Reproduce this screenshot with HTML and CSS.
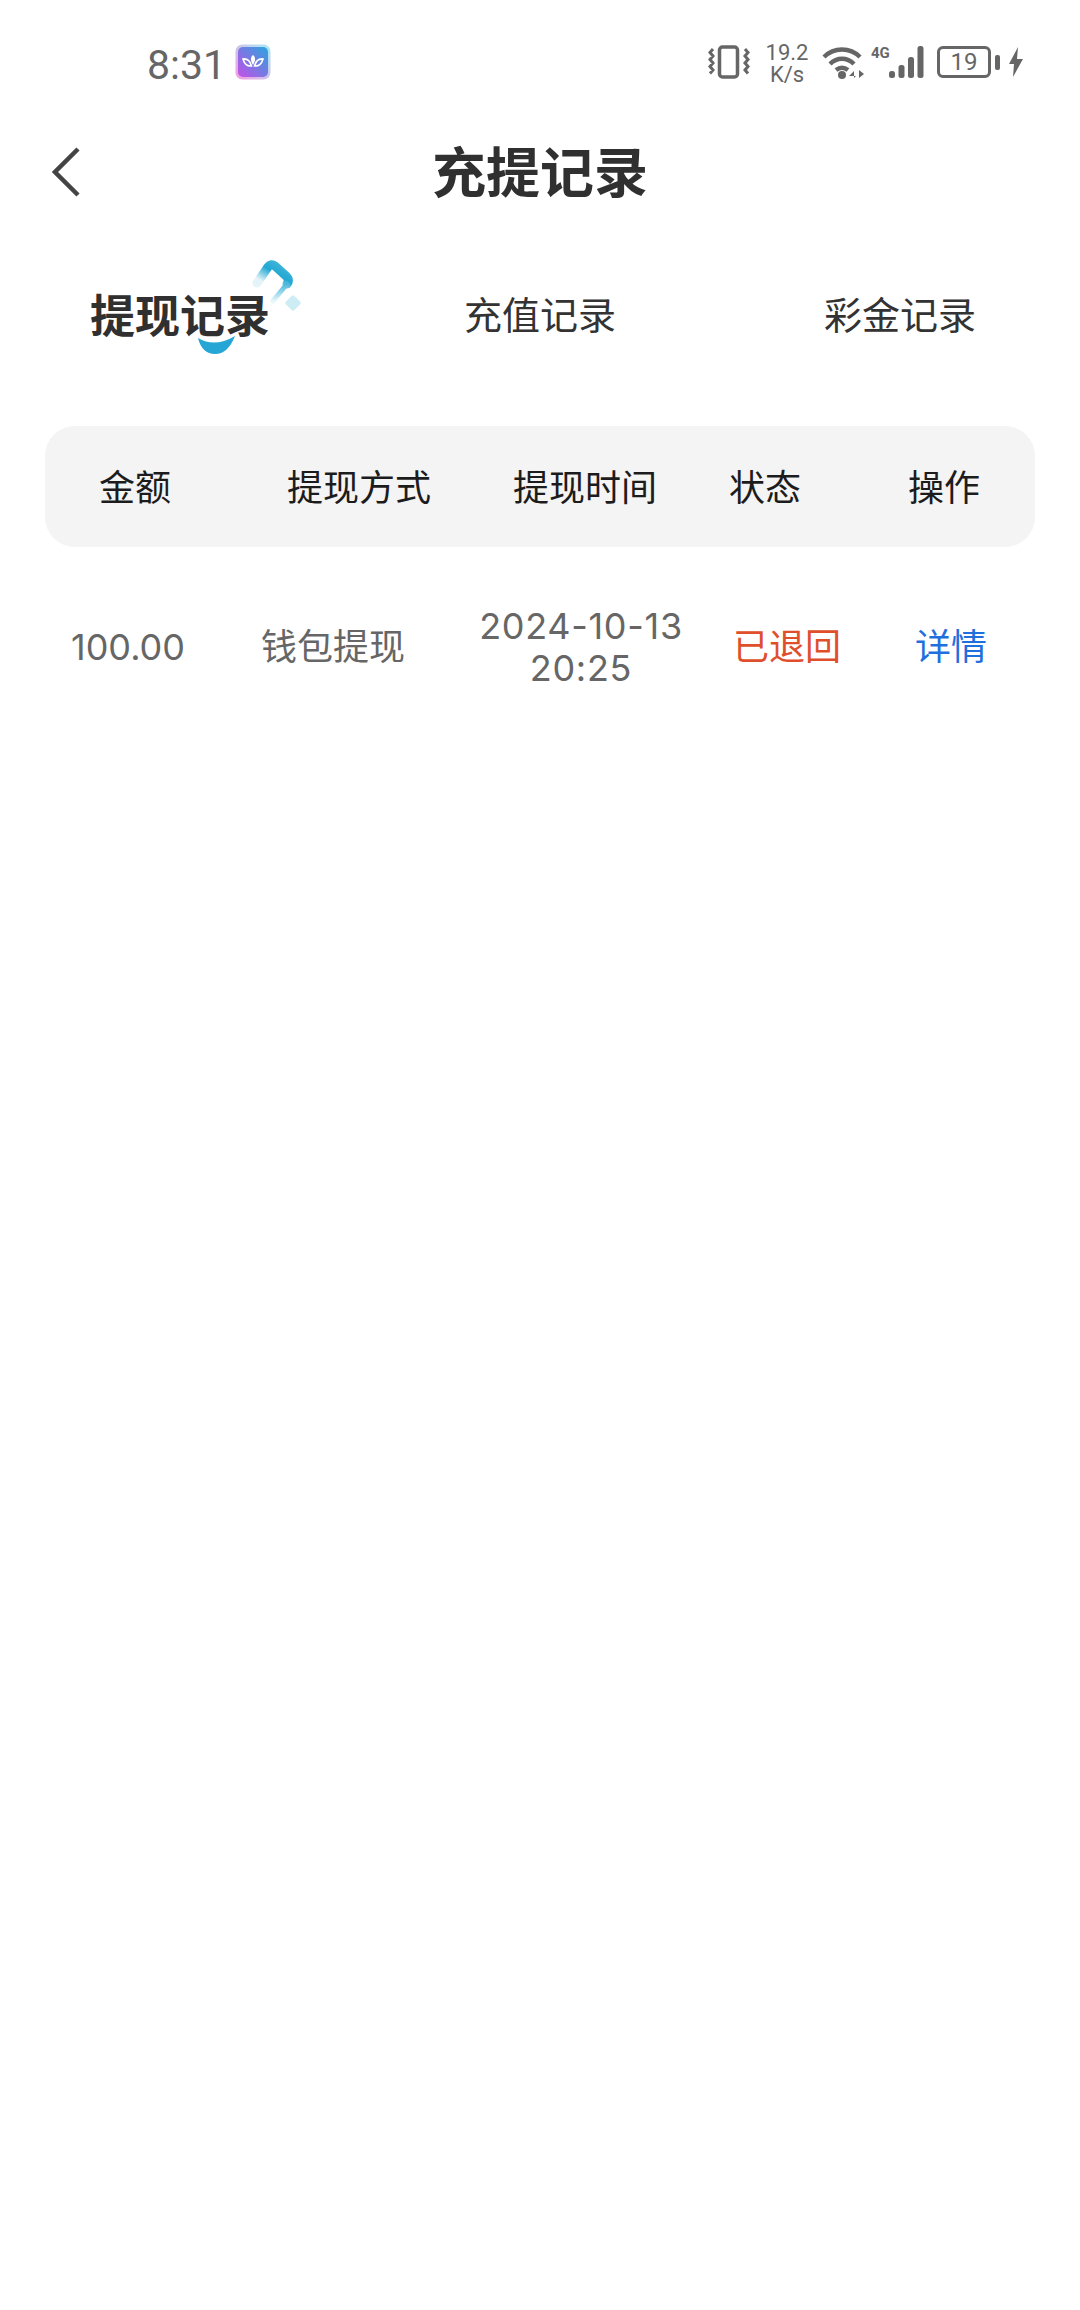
FILE: index.html
```html
<!DOCTYPE html>
<html lang="zh-CN">
<head>
<meta charset="utf-8">
<title>充提记录</title>
<link rel="stylesheet" href="styles.css">
</head>
<body>
<div class="page">
  <div class="status">
    <div class="status-left">
      <span class="clock">8:31</span>
      <svg class="app-icon" width="36" height="36" viewBox="0 0 36 36">
        <defs>
          <linearGradient id="ag" x1="0" y1="1" x2="1" y2="0"><stop offset="0" stop-color="#c44fe8"/><stop offset="1" stop-color="#2aa5de"/></linearGradient>
          <linearGradient id="ab" x1="0" y1="1" x2="1" y2="0"><stop offset="0" stop-color="#f59be0"/><stop offset="1" stop-color="#a8ecf5"/></linearGradient>
        </defs>
        <rect x="0.5" y="0.5" width="35" height="35" rx="7" fill="url(#ab)"/>
        <rect x="3" y="3" width="30" height="30" rx="5" fill="url(#ag)"/>
        <path d="M18 11c2.500 2 3 5 0 10c-3-5-2.500-8 0-10z" fill="#fff"/>
        <path d="M8 15c4-.5 7 1.500 8.500 7c-4 .5-7-2-8.500-7zM28 15c-4-.5-7 1.500-8.500 7c4 .5 7-2 8.500-7z" fill="none" stroke="#fff" stroke-width="1.600"/>
      </svg>
    </div>
    <div class="status-right">
      <svg class="i-vib" width="42" height="34" viewBox="0 0 42 34" fill="none" stroke="#666">
        <rect x="11.500" y="2" width="18" height="30" rx="3" stroke-width="3.500"/>
        <path d="M5 4l-3 3.500 3 3.500-3 3.500 3 3.500-3 3.500 3 3.500-3 3.500M37 4l3 3.500-3 3.500 3 3.500-3 3.500 3 3.500-3 3.500 3 3.500" stroke-width="3"/>
      </svg>
      <div class="speed"><span>19.2</span><span>K/s</span></div>
      <svg class="i-wifi" width="44" height="34" viewBox="0 0 44 34" fill="none">
        <path d="M2 12C12 2 28 2 38 12M8 19C15 12 25 12 32 19M14 25c4-3 8-3 12 0" stroke="#666" stroke-width="4.500"/>
        <circle cx="20" cy="30" r="4" fill="#666"/>
        <path d="M32 33v-7l-5 5h7zM37 25v8l5-4z" fill="#666"/>
      </svg>
      <div class="signal">
        <span class="net">4G</span>
        <svg width="35" height="34" viewBox="0 0 35 34" fill="#666">
          <rect x="0" y="26" width="6" height="7" rx="2.500"/>
          <rect x="9.500" y="20" width="6" height="13" rx="2.500"/>
          <rect x="19" y="12" width="6" height="21" rx="2.500"/>
          <rect x="28.500" y="1" width="6" height="32" rx="2.500"/>
        </svg>
      </div>
      <div class="battery"><span>19</span></div>
      <span class="nub"></span>
      <svg class="i-bolt" width="14" height="30" viewBox="0 0 14 30"><path d="M9 0L0 17h5l-1 13 10-18H8z" fill="#666"/></svg>
    </div>
  </div>

  <header class="nav">
    <svg class="back" width="28" height="50" viewBox="0 0 28 50" fill="none"><path d="M26 2L3 25l23 23" stroke="#444" stroke-width="4.500"/></svg>
    <h1>充提记录</h1>
  </header>

  <nav class="tabs">
    <div class="tab tab-active">
      <span>提现记录</span>
      <svg class="deco" width="126" height="100" viewBox="0 0 126 100" fill="none">
        <defs><linearGradient id="dg" x1="0" y1="0.700" x2="0.700" y2="0"><stop offset="0" stop-color="#e4f4f9"/><stop offset="0.600" stop-color="#22a8d3"/><stop offset="1" stop-color="#3ab2d8"/></linearGradient>
        <linearGradient id="dt" x1="0" y1="0" x2="0" y2="1"><stop offset="0" stop-color="#4ab8dc"/><stop offset="1" stop-color="#e8f6fa"/></linearGradient></defs>
        <path d="M81 28L92 12Q95 8 99 11L110 21Q114 25 111 29" stroke="url(#dg)" stroke-width="9" stroke-linecap="round"/>
        <path d="M111 29L97 46" stroke="url(#dt)" stroke-width="5" stroke-linecap="round"/>
        <rect x="111" y="42" width="12" height="12" rx="2" transform="rotate(45 117 48)" fill="#cdecf4"/>
        <path d="M22 83Q39 93 59 81Q52 99 39 99Q26 99 22 83z" fill="#26a6d4"/>
      </svg>
    </div>
    <div class="tab">充值记录</div>
    <div class="tab">彩金记录</div>
  </nav>

  <div class="thead">
    <div>金额</div><div>提现方式</div><div>提现时间</div><div>状态</div><div>操作</div>
  </div>
  <div class="trow">
    <div>100.00</div>
    <div>钱包提现</div>
    <div class="date">2024-10-13<br>20:25</div>
    <div class="returned">已退回</div>
    <div class="detail">详情</div>
  </div>
</div>
</body>
</html>
```
FILE: styles.css
```css
* { box-sizing: border-box; }
html, body { margin: 0; background: #fff; }
body { font-family: Roboto, "Noto Sans CJK SC", sans-serif; }
.page { width: 1080px; height: 2310px; overflow: hidden; }

.status { height: 122px; display: flex; justify-content: space-between; align-items: flex-start; padding: 40px 57px 0 147px; color: #666; }
.status-left { display: flex; align-items: center; gap: 9px; height: 44px; }
.clock { font-size: 41px; line-height: 46px; padding-top: 5px; }
.app-icon { display: block; }
.status-right { display: flex; align-items: center; height: 44px; }
.i-vib { margin-right: 14px; }
.speed { display: flex; flex-direction: column; align-items: center; font-size: 22px; line-height: 22px; width: 46px; margin-right: 12px; padding-top: 3px; }
.i-wifi { margin-right: 5px; }
.signal { position: relative; width: 53px; height: 34px; display: flex; justify-content: flex-end; margin-right: 13px; }
.net { position: absolute; left: 0; top: 0; font-size: 15px; line-height: 16px; font-weight: 700; }
.battery { width: 54px; height: 32px; border: 3px solid #666; border-radius: 6px; display: flex; align-items: center; justify-content: center; font-size: 24px; line-height: 26px; }
.nub { width: 5px; height: 15px; background: #666; border-radius: 2px; margin: 0 9px 0 4px; }

.nav { position: relative; height: 102px; display: flex; align-items: center; justify-content: center; }
.back { position: absolute; left: 52px; top: 25px; }
.nav h1 { margin: 0; padding-top: 4px; font-size: 54px; line-height: 72px; font-weight: 700; color: #303030; }

.tabs { display: grid; grid-template-columns: repeat(3, 360px); height: 90px; margin-top: 47px; align-items: center; }
.tab { text-align: center; font-size: 38px; line-height: 50px; color: #333; position: relative; }
.tab-active { font-size: 45px; font-weight: 700; color: #303030; }
.tab-active span { position: relative; z-index: 1; top: 2px; }
.deco { position: absolute; left: 176px; top: -36px; }

.thead, .trow { display: grid; text-align: center; font-size: 36px; }
.thead { margin: 65px 45px 0; padding-top: 5px; height: 121px; background: #f4f4f4; border-radius: 30px; align-items: center; grid-template-columns: 180px 268px 184px 176px 182px; color: #1c1c1c; line-height: 46px; }
.trow { margin: 45px 45px 0; height: 110px; align-items: center; grid-template-columns: 166px 244px 252px 160px 168px; color: #666; line-height: 42px; font-family: Inter, "Noto Sans CJK SC", sans-serif; }
.date { letter-spacing: 0.7px; }
.returned { color: #df4f2c; }
.detail { color: #1f6fdc; }
```
